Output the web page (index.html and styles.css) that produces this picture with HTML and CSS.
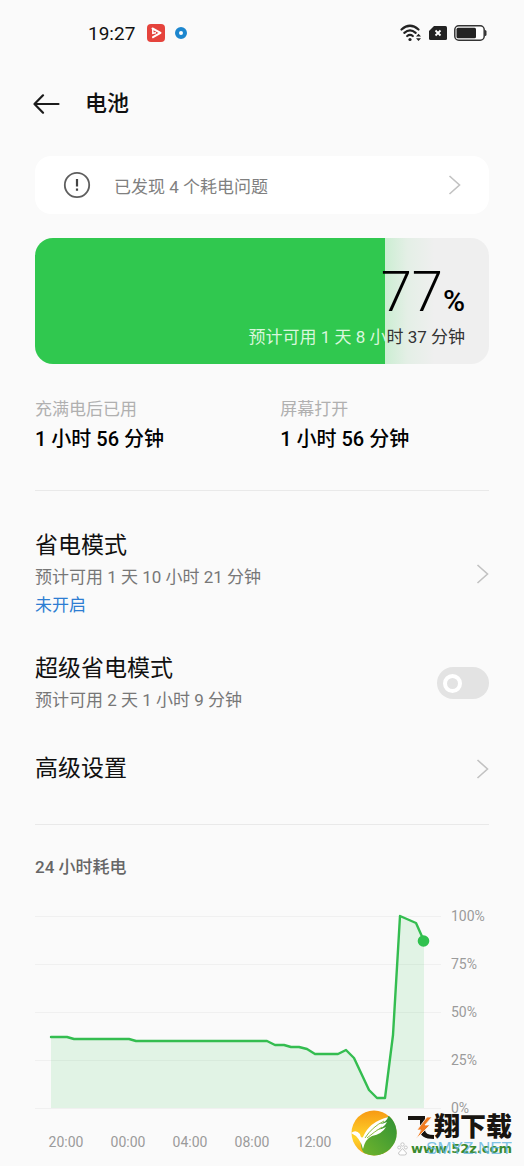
FILE: index.html
```html
<!DOCTYPE html>
<html lang="zh-CN">
<head>
<meta charset="utf-8">
<meta name="viewport" content="width=device-width, initial-scale=1">
<title>电池</title>
<link rel="stylesheet" href="styles.css">
</head>
<body>
<div class="screen">
  <div class="status">
    <time class="clock">19:27</time>
    <svg class="app-icon" width="18" height="18" viewBox="0 0 18 18" aria-hidden="true"><rect width="18" height="18" rx="4" fill="#e5433c"/><path d="M5.500 4.500 13.500 8.800 6 13.200" fill="none" stroke="#fff" stroke-width="2" stroke-linejoin="round" stroke-linecap="round"/><path d="M5.800 4.800v4.500l3.200-.5" fill="none" stroke="#fff" stroke-width="1.500"/></svg>
    <svg width="12" height="12" viewBox="0 0 12 12" aria-hidden="true"><circle cx="6" cy="6" r="4" fill="#fff" stroke="#1c86ce" stroke-width="4"/></svg>
    <div class="system">
      <svg width="22" height="18" viewBox="0 0 22 18" aria-hidden="true"><g fill="none" stroke="#222" stroke-width="2.200" stroke-linecap="round"><path d="M1.500 5.500Q10 -2 18.500 5.500"/><path d="M4.300 8.800Q10 4 15.700 8.800"/><path d="M7.200 12Q10 9.700 12.800 12"/></g><circle cx="10" cy="15.500" r="1.600" fill="#222"/><path d="M16 12.500 18.500 9.800 21 12.500zM16 14.200h5l-2.500 2.800z" fill="#222"/></svg>
      <svg width="18" height="14" viewBox="0 0 18 14" aria-hidden="true"><path d="M5 0h11.500Q18 0 18 1.500v11Q18 14 16.500 14h-15Q0 14 0 12.500V5z" fill="#222"/><path d="m6.500 4.500 5 5m0-5-5 5" stroke="#fff" stroke-width="1.800"/></svg>
      <svg width="33" height="16" viewBox="0 0 33 16" aria-hidden="true"><rect x=".8" y=".8" width="29.400" height="14.400" rx="4" fill="#fff" stroke="#333" stroke-width="1.500"/><rect x="2.500" y="2.700" width="19.500" height="10.600" rx="1.500" fill="#222"/><path d="M31 5q1.500 0 1.500 1.500v3q0 1.500-1.500 1.500z" fill="#333"/></svg>
    </div>
  </div>

  <header class="header">
    <button class="back" type="button" aria-label="返回"><svg width="27" height="20" viewBox="0 0 27 20"><path d="M10 1.300 1.500 10l8.500 8.700M1.500 10h24" fill="none" stroke="#1b1b1b" stroke-width="2.200" stroke-linecap="round" stroke-linejoin="round"/></svg></button>
    <h1 class="title">电池</h1>
  </header>

  <main>
    <a class="notice" href="#issues">
      <svg width="28" height="28" viewBox="0 0 28 28" aria-hidden="true"><circle cx="14" cy="14" r="12.200" fill="none" stroke="#5e5e5e" stroke-width="1.800"/><path d="M14 8v7.500M14 17.500v2.300" stroke="#444" stroke-width="2.200"/></svg>
      <span class="notice-text">已发现 4 个耗电问题</span>
      <svg class="chevron" viewBox="0 0 13 20" aria-hidden="true"><path d="m1.500 1 10 9-10 9"/></svg>
    </a>

    <section class="battery" aria-label="电量">
      <p class="level">77<span class="percent">%</span></p>
      <p class="remaining"><span class="on-fill">预计可用 1 天 8 小</span>时 37 分钟</p>
    </section>

    <dl class="stats">
      <div><dt>充满电后已用</dt><dd>1 小时 56 分钟</dd></div>
      <div><dt>屏幕打开</dt><dd>1 小时 56 分钟</dd></div>
    </dl>

    <section class="settings">
      <a class="row" href="#saver">
        <span class="copy"><span class="name">省电模式</span><span class="hint">预计可用 1 天 10 小时 21 分钟</span><span class="state">未开启</span></span>
        <svg class="chevron" viewBox="0 0 13 20" aria-hidden="true"><path d="m1.500 1 10 9-10 9"/></svg>
      </a>
      <label class="row" for="super">
        <span class="copy"><span class="name">超级省电模式</span><span class="hint">预计可用 2 天 1 小时 9 分钟</span></span>
        <input class="switch" id="super" type="checkbox" role="switch">
      </label>
      <a class="row" href="#advanced">
        <span class="copy"><span class="name">高级设置</span></span>
        <svg class="chevron" viewBox="0 0 13 20" aria-hidden="true"><path d="m1.500 1 10 9-10 9"/></svg>
      </a>
    </section>

    <section class="usage">
      <h2 class="usage-title">24 小时耗电</h2>
      <div class="chart">
        <svg class="plot" viewBox="0 0 406 208" role="img" aria-label="24 小时耗电">
          <path d="M0 8.500h406M0 56.500h406M0 104.500h406M0 152.500h406M0 200.500h406" stroke="#f0f0f0"/>
          <path d="M16 200V129h16l7 2h55l7 2h131l8 4h9l7 2h8l8 2 8 5h23l8-4 8 8 15 32 8 8h8l8-63 7-119 16 7 8 18v167z" fill="#30c850" fill-opacity=".12"/>
          <path d="M16 129h16l7 2h55l7 2h131l8 4h9l7 2h8l8 2 8 5h23l8-4 8 8 15 32 8 8h8l8-63 7-119 16 7 8 18" fill="none" stroke="#34bd50" stroke-width="2.400" stroke-linejoin="round" stroke-linecap="round"/>
          <circle cx="388.500" cy="33" r="5.800" fill="#30c14e"/>
        </svg>
        <div class="levels"><span>100%</span><span>75%</span><span>50%</span><span>25%</span><span>0%</span></div>
        <div class="hours"><span>20:00</span><span>00:00</span><span>04:00</span><span>08:00</span><span>12:00</span></div>
      </div>
    </section>
  </main>

  <aside class="watermark">
    <svg width="46" height="46" viewBox="0 0 46 46" aria-hidden="true">
      <defs>
        <linearGradient id="gold" x1="0" y1="0" x2="0" y2="1"><stop offset="0" stop-color="#f79a13"/><stop offset=".6" stop-color="#ffd42b"/><stop offset="1" stop-color="#f5a51b"/></linearGradient>
        <linearGradient id="leaf" x1="0" y1="1" x2="1" y2="0"><stop offset="0" stop-color="#72b52c"/><stop offset="1" stop-color="#2f9135"/></linearGradient>
      </defs>
      <circle cx="23" cy="23" r="22.500" fill="url(#gold)"/>
      <path d="M38 6A22.500 22.500 0 0 1 13 43Q9 38 10 31 18 17 38 6z" fill="url(#leaf)"/>
      <path d="M0 23q5-4 9 1 1 5 3 3Q18 12 37 7q-1 5-9 7 4 0 8-2-3 6-11 8 5 0 10-3-4 7-14 9-7 3-9 13-3-12-12-16z" fill="#fff"/>
      <path d="M14 28Q21 17 33 11M16 28Q23 22 31 17" fill="none" stroke="#8dbb3e"/>
    </svg>
    <svg class="paw" width="11" height="14" viewBox="0 0 11 14" aria-hidden="true"><g fill="#fff" stroke="#c6c6c6"><circle cx="2.200" cy="5.500" r="1.500"/><circle cx="5.500" cy="2.500" r="1.700"/><circle cx="8.800" cy="5.500" r="1.500"/><path d="M5.500 6.500 9.500 11q0 2-2 2h-4q-2 0-2-2z"/></g></svg>
    <div class="brand">
      <span class="brand-name"><svg class="brand-flight" viewBox="0 0 26 25" role="img" aria-label="飞"><path d="M0 1h17v14q0 5 9 5v4q-14 0-14-9V5H0z" fill="#181410"/><path d="m24 2-7 8h5L8 24l5-9H9L19 2z" fill="#f17b20" stroke="#fafafa" stroke-width=".8"/></svg>翔下载</span>
      <span class="brand-url">www.52z.com<span class="brand-ghost">SMYZ.NET</span></span>
    </div>
  </aside>
</div>
</body>
</html>
```
FILE: styles.css
```css
*, *::before { box-sizing: border-box; }

body {
  margin: 0;
  background: #fafafa;
  color: #111;
  font-family: Roboto, "Noto Sans CJK SC", sans-serif;
}

h1, h2, p, dl, dd { margin: 0; }
a { color: inherit; text-decoration: none; }
svg { display: block; flex: none; }

.screen {
  position: relative;
  padding: 16px 35px;
}

.status {
  display: flex;
  align-items: center;
  height: 34px;
  padding-left: 53px;
}

.clock {
  font-size: 19px;
  margin-right: 12px;
}

.app-icon { margin-right: 10px; }

.system {
  display: flex;
  align-items: center;
  gap: 7px;
  margin-left: auto;
  padding-right: 2px;
}

.header {
  display: flex;
  align-items: center;
  gap: 25px;
  height: 44px;
  margin: 32px 0 30px;
}

.back {
  padding: 0;
  border: 0;
  margin-left: -2px;
  background: none;
}

.title {
  font-size: 22px;
  font-weight: 500;
  line-height: 32px;
}

.notice {
  display: flex;
  align-items: center;
  height: 58px;
  padding: 0 28px;
  border-radius: 16px;
  background: #fff;
}

.notice-text {
  flex: 1;
  margin-left: 23px;
  color: #808080;
  font-size: 17px;
}

.chevron {
  width: 13px;
  height: 20px;
  fill: none;
  stroke: #c2c2c2;
  stroke-width: 1.6;
}

.battery {
  margin-top: 24px;
  padding: 22px 24px 14px;
  border-radius: 18px;
  background: linear-gradient(90deg, #30c84f 77%, #cbeed2 77%, #e4efe6 82%, #efefef 88%);
  text-align: right;
}

.level {
  color: #000;
  font-size: 56px;
  font-weight: 300;
  line-height: 64px;
}

.percent {
  font-size: 30px;
  font-weight: 500;
  line-height: 1;
}

.remaining {
  color: #333;
  font-size: 17px;
  line-height: 26px;
}

.on-fill { color: #d9f7dd; }

.stats {
  display: grid;
  grid-template-columns: 54% 1fr;
  padding: 32px 0 34px;
  border-bottom: 1px solid #e9e9e9;
}

.stats dt {
  color: #b0b0b0;
  font-size: 17px;
  line-height: 26px;
}

.stats dd {
  color: #000;
  font-size: 20px;
  font-weight: 500;
  line-height: 34px;
}

.settings {
  display: grid;
  gap: 33px;
  padding: 38px 0 33px;
  border-bottom: 1px solid #e9e9e9;
}

.row {
  display: flex;
  align-items: center;
  justify-content: space-between;
  min-height: 44px;
}

.copy { display: grid; }

.name {
  font-size: 23px;
  line-height: 34px;
}

.hint,
.state {
  color: #777;
  font-size: 17px;
  line-height: 28px;
}

.state { color: #2d7dd2; }

.switch {
  appearance: none;
  display: flex;
  align-items: center;
  width: 52px;
  height: 32px;
  margin: 0;
  padding: 0 6px;
  border-radius: 16px;
  background: #e3e3e3;
}

.switch::before {
  content: "";
  width: 19px;
  height: 19px;
  border: 4px solid #fff;
  border-radius: 50%;
}

.switch:checked {
  justify-content: flex-end;
  background: #30c84f;
}

.usage-title {
  margin: 28px 0 27px;
  color: #666;
  font-size: 17px;
  font-weight: 500;
  line-height: 28px;
}

.chart {
  display: grid;
  grid-template-columns: 1fr 38px;
  column-gap: 10px;
  color: #9b9b9b;
  font-size: 14px;
  line-height: 16px;
}

.plot {
  width: 100%;
  height: auto;
}

.levels {
  display: flex;
  flex-direction: column;
  justify-content: space-between;
}

.hours {
  display: grid;
  grid-template-columns: repeat(5, 1fr);
  margin-top: 18px;
  padding-right: 96px;
  text-align: center;
}

.watermark {
  position: absolute;
  right: 12px;
  bottom: 8px;
  display: flex;
  align-items: center;
}

.paw {
  align-self: flex-end;
  margin-bottom: 2px;
}

.brand {
  display: grid;
  justify-items: end;
  padding-top: 6px;
}

.brand-name {
  display: flex;
  align-items: center;
  color: #181410;
  font-size: 26px;
  font-weight: 900;
  line-height: 26px;
}

.brand-flight {
  width: 26px;
  height: 25px;
}

.brand-url {
  position: relative;
  color: #3b8a2e;
  font-family: "DejaVu Sans", sans-serif;
  font-size: 13px;
  font-weight: 700;
  line-height: 18px;
}

.brand-ghost {
  position: absolute;
  right: 0;
  top: 0;
  color: #62b5df;
  font-family: "Liberation Sans", sans-serif;
  font-size: 17px;
  font-weight: 400;
  opacity: .8;
}
```
